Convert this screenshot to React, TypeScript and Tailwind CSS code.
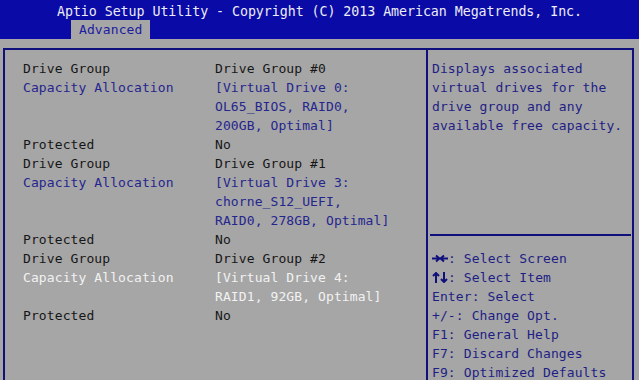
import React from "react";

const BLACK = "text-[#161616]";
const BLUE = "text-[#25258e]";
const WHITE = "text-[#f2f2f2]";

type Row = { label?: string; labelCls?: string; value?: string; valueCls?: string };

const rows: Row[] = [
  { label: "Drive Group", labelCls: BLACK, value: "Drive Group #0", valueCls: BLACK },
  { label: "Capacity Allocation", labelCls: BLUE, value: "[Virtual Drive 0:", valueCls: BLUE },
  { value: "OL65_BIOS, RAID0,", valueCls: BLUE },
  { value: "200GB, Optimal]", valueCls: BLUE },
  { label: "Protected", labelCls: BLACK, value: "No", valueCls: BLACK },
  { label: "Drive Group", labelCls: BLACK, value: "Drive Group #1", valueCls: BLACK },
  { label: "Capacity Allocation", labelCls: BLUE, value: "[Virtual Drive 3:", valueCls: BLUE },
  { value: "chorne_S12_UEFI,", valueCls: BLUE },
  { value: "RAID0, 278GB, Optimal]", valueCls: BLUE },
  { label: "Protected", labelCls: BLACK, value: "No", valueCls: BLACK },
  { label: "Drive Group", labelCls: BLACK, value: "Drive Group #2", valueCls: BLACK },
  { label: "Capacity Allocation", labelCls: WHITE, value: "[Virtual Drive 4:", valueCls: WHITE },
  { value: "RAID1, 92GB, Optimal]", valueCls: WHITE },
  { label: "Protected", labelCls: BLACK, value: "No", valueCls: BLACK },
];

const help = [
  "Displays associated",
  "virtual drives for the",
  "drive group and any",
  "available free capacity.",
];

function LeftRight() {
  return (
    <svg width="16" height="11" viewBox="0 0 16 11" className="inline-block align-[-1px]" fill="none" stroke="#10107c" strokeWidth="2">
      <path d="M0 5.5H7.5M4 2.5L7.5 5.5L4 8.5" />
      <path d="M16 5.5H8.5M12 2.5L8.5 5.5L12 8.5" />
    </svg>
  );
}

function UpDown() {
  return (
    <svg width="16" height="11" viewBox="0 0 16 11" className="inline-block align-[-1px]" fill="none" stroke="#10107c" strokeWidth="2">
      <path d="M4 11V1M1 4L4 1L7 4" />
      <path d="M12 0V10M9 7L12 10L15 7" />
    </svg>
  );
}

const keys: { icon?: React.ReactNode; text: string }[] = [
  { icon: <LeftRight />, text: ": Select Screen" },
  { icon: <UpDown />, text: ": Select Item" },
  { text: "Enter: Select" },
  { text: "+/-: Change Opt." },
  { text: "F1: General Help" },
  { text: "F7: Discard Changes" },
  { text: "F9: Optimized Defaults" },
];

export default function App() {
  return (
    <div
      className="w-[639px] h-[380px] overflow-hidden bg-[#a6a6a6] flex flex-col text-[13px] tracking-[0.1px]"
      style={{ fontFamily: '"DejaVu Sans Mono", "Liberation Mono", monospace' }}
    >
      <div className="h-[39px] bg-[#0a0aa6] flex flex-col shrink-0">
        <div className="h-[20px] pt-[4px] leading-[16px] text-center text-[#ececf4] whitespace-pre text-[13.3px] tracking-[-0.05px]">
          Aptio Setup Utility - Copyright (C) 2013 American Megatrends, Inc.
        </div>
        <div className="h-[19px] pl-[71px] flex">
          <div className="h-[19px] w-[79px] bg-[#a6a6a6] leading-[19px] pl-[8px] text-[#1c1ca0]">
            Advanced
          </div>
        </div>
      </div>
      <div className="mt-[9px] ml-[3px] mr-[5px] flex-1 border-t-2 border-l-2 border-r-2 border-[#10107c] flex">
        <div className="w-[423px] border-r-2 border-[#10107c] pl-[18px] pt-[9px] flex flex-col">
          {rows.map((r, i) => (
            <div key={i} className="h-[19px] leading-[19px] flex whitespace-pre">
              <div className={`w-[192px] ${r.labelCls ?? ""}`}>{r.label ?? ""}</div>
              <div className={r.valueCls ?? ""}>{r.value ?? ""}</div>
            </div>
          ))}
        </div>
        <div className="flex-1 flex flex-col pt-[9px]">
          <div className="pl-[4px] text-[#1e1e84]">
            {help.map((h, i) => (
              <div key={i} className="h-[19px] leading-[19px] whitespace-pre">
                {h}
              </div>
            ))}
          </div>
          <div className="mt-[99px] ml-[2px] mr-[1px] h-[2px] bg-[#10107c]" />
          <div className="mt-[13px] pl-[4px] text-[#1e1e84]">
            {keys.map((k, i) => (
              <div key={i} className="h-[19px] leading-[19px] whitespace-pre">
                {k.icon ?? null}
                {k.text}
              </div>
            ))}
          </div>
        </div>
      </div>
    </div>
  );
}
